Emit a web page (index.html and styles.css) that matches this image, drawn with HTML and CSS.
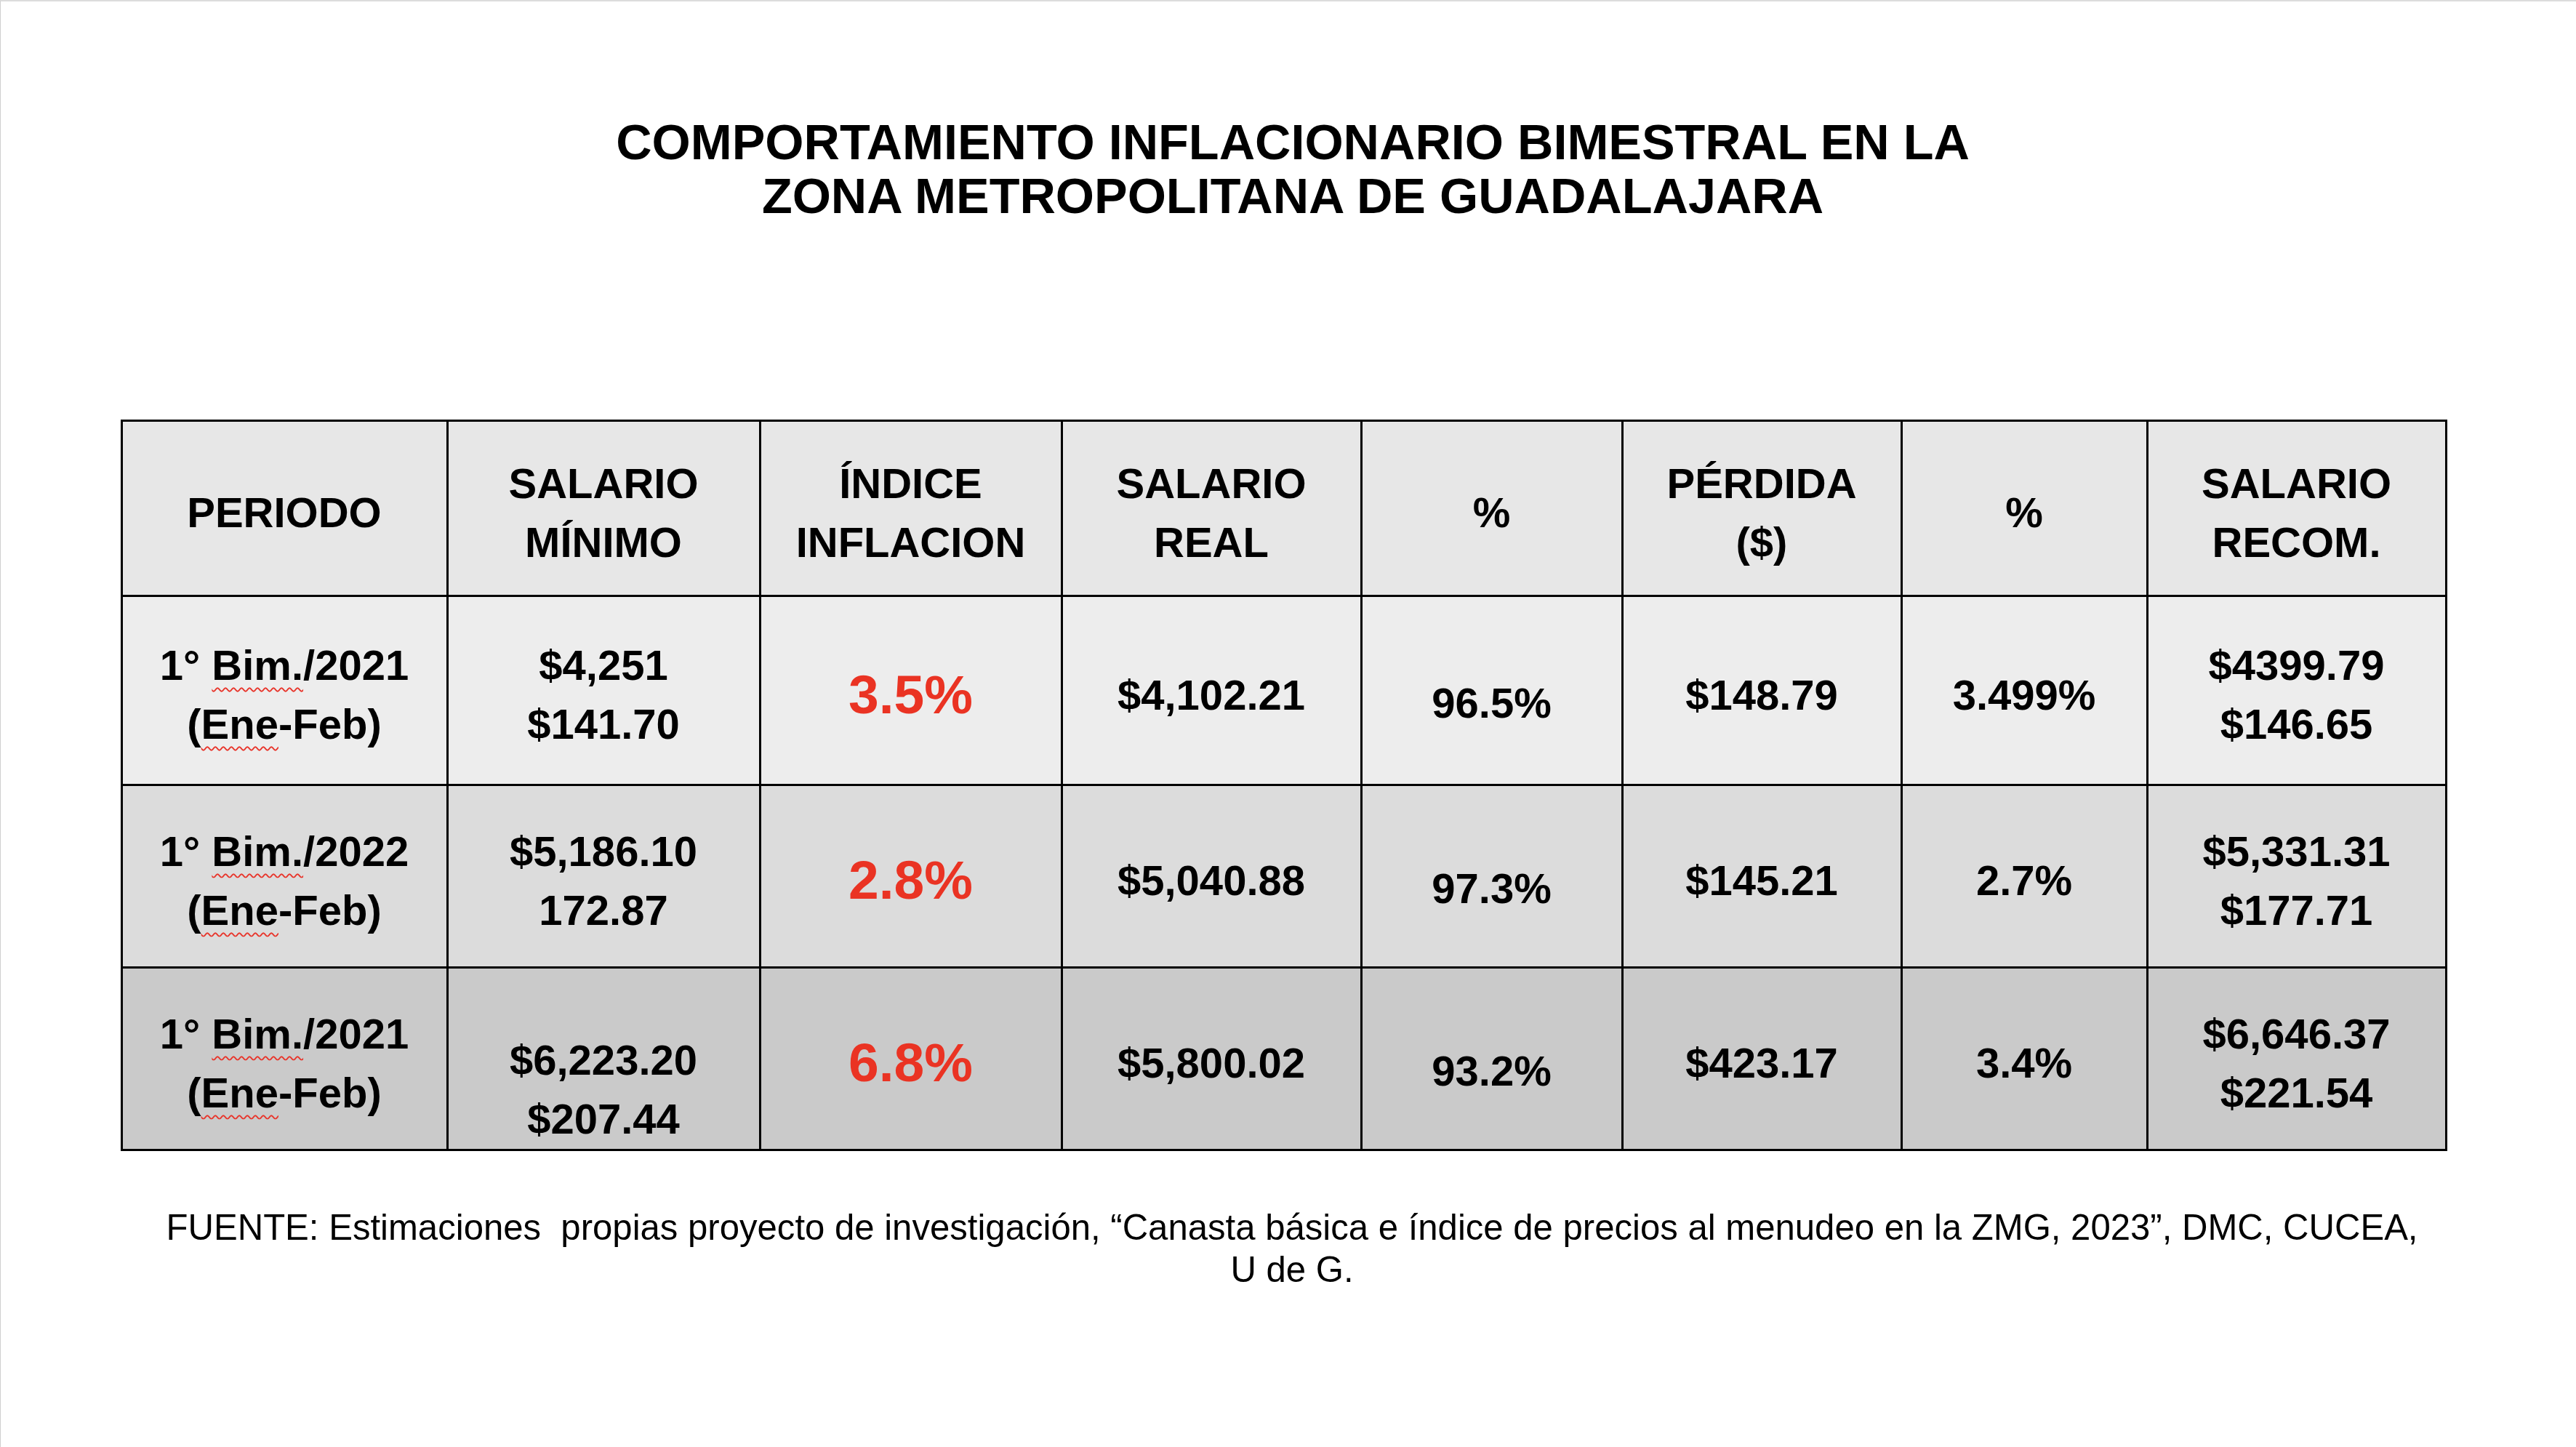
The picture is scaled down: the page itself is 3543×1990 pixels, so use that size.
FILE: index.html
```html
<!DOCTYPE html>
<html lang="es">
<head>
<meta charset="utf-8">
<title>Comportamiento inflacionario bimestral</title>
<link rel="stylesheet" href="styles.css">
</head>
<body>
<main class="slide">
  <h1 class="title">COMPORTAMIENTO INFLACIONARIO BIMESTRAL EN LA<br>ZONA METROPOLITANA DE GUADALAJARA</h1>

  <table class="data">
    <colgroup>
      <col class="c1"><col class="c2"><col class="c3"><col class="c4">
      <col class="c5"><col class="c6"><col class="c7"><col class="c8">
    </colgroup>
    <thead>
      <tr class="row-head">
        <th>PERIODO</th>
        <th>SALARIO<br>MÍNIMO</th>
        <th>ÍNDICE<br>INFLACION</th>
        <th>SALARIO<br>REAL</th>
        <th>%</th>
        <th>PÉRDIDA<br>($)</th>
        <th>%</th>
        <th>SALARIO<br>RECOM.</th>
      </tr>
    </thead>
    <tbody>
      <tr class="row-a">
        <td>1° <span class="spell">Bim.</span>/2021<br>(<span class="spell">Ene</span>-Feb)</td>
        <td>$4,251<br>$141.70</td>
        <td class="infl">3.5%</td>
        <td>$4,102.21</td>
        <td class="pct">96.5%</td>
        <td>$148.79</td>
        <td>3.499%</td>
        <td>$4399.79<br>$146.65</td>
      </tr>
      <tr class="row-b">
        <td>1° <span class="spell">Bim.</span>/2022<br>(<span class="spell">Ene</span>-Feb)</td>
        <td>$5,186.10<br>172.87</td>
        <td class="infl">2.8%</td>
        <td>$5,040.88</td>
        <td class="pct">97.3%</td>
        <td>$145.21</td>
        <td>2.7%</td>
        <td>$5,331.31<br>$177.71</td>
      </tr>
      <tr class="row-c">
        <td>1° <span class="spell">Bim.</span>/2021<br>(<span class="spell">Ene</span>-Feb)</td>
        <td class="low">$6,223.20<br>$207.44</td>
        <td class="infl">6.8%</td>
        <td>$5,800.02</td>
        <td class="pct">93.2%</td>
        <td>$423.17</td>
        <td>3.4%</td>
        <td>$6,646.37<br>$221.54</td>
      </tr>
    </tbody>
  </table>

  <p class="source">FUENTE: Estimaciones&nbsp; propias proyecto de investigación, “Canasta básica e índice de precios al menudeo en la ZMG, 2023”, DMC, CUCEA,<br>U de G.</p>
</main>
</body>
</html>
```

FILE: styles.css
```css
html, body {
  margin: 0;
  padding: 0;
  background: #ffffff;
}

body {
  width: 3543px;
  height: 1990px;
  box-sizing: border-box;
  border-top: 2px solid #dcdcdc;
  border-left: 1px solid #cfcfcf;
  font-family: "Liberation Sans", Arial, sans-serif;
  color: #000000;
  overflow: hidden;
}

.slide {
  display: flex;
  flex-direction: column;
  align-items: center;
}

.title {
  margin: 156px 0 0 12px;
  font-size: 68.4px;
  line-height: 74px;
  font-weight: 700;
  text-align: center;
  letter-spacing: 0;
}

.data {
  margin: 271px 0 0 -13px;
  border-collapse: collapse;
  table-layout: fixed;
  width: 3197px;
  font-size: 58px;
  line-height: 81px;
  font-weight: 700;
  text-align: center;
}

.data th,
.data td {
  border: 3px solid #000000;
  padding: 11px 0 0 0;
  vertical-align: middle;
  font-weight: 700;
}

.c1 { width: 448px; }
.c2 { width: 430px; }
.c3 { width: 415px; }
.c4 { width: 412px; }
.c5 { width: 359px; }
.c6 { width: 384px; }
.c7 { width: 338px; }
.c8 { width: 411px; }

.row-head { height: 241px; background: #e7e7e7; }
.row-a { height: 260px; background: #ededed; }
.row-b { height: 251px; background: #dcdcdc; }
.row-c { height: 251px; background: #cacaca; }

.data td.infl {
  color: #ea3323;
  font-size: 75px;
}

.data td.pct {
  padding-top: 33px;
}

.data td.low {
  padding-top: 84px;
}

.spell {
  text-decoration: underline wavy #e8352b;
  text-decoration-thickness: 2px;
  text-underline-offset: 10px;
}

.source {
  margin: 76px 0 0 10px;
  font-size: 49.1px;
  line-height: 58px;
  font-weight: 400;
  text-align: center;
}
```
